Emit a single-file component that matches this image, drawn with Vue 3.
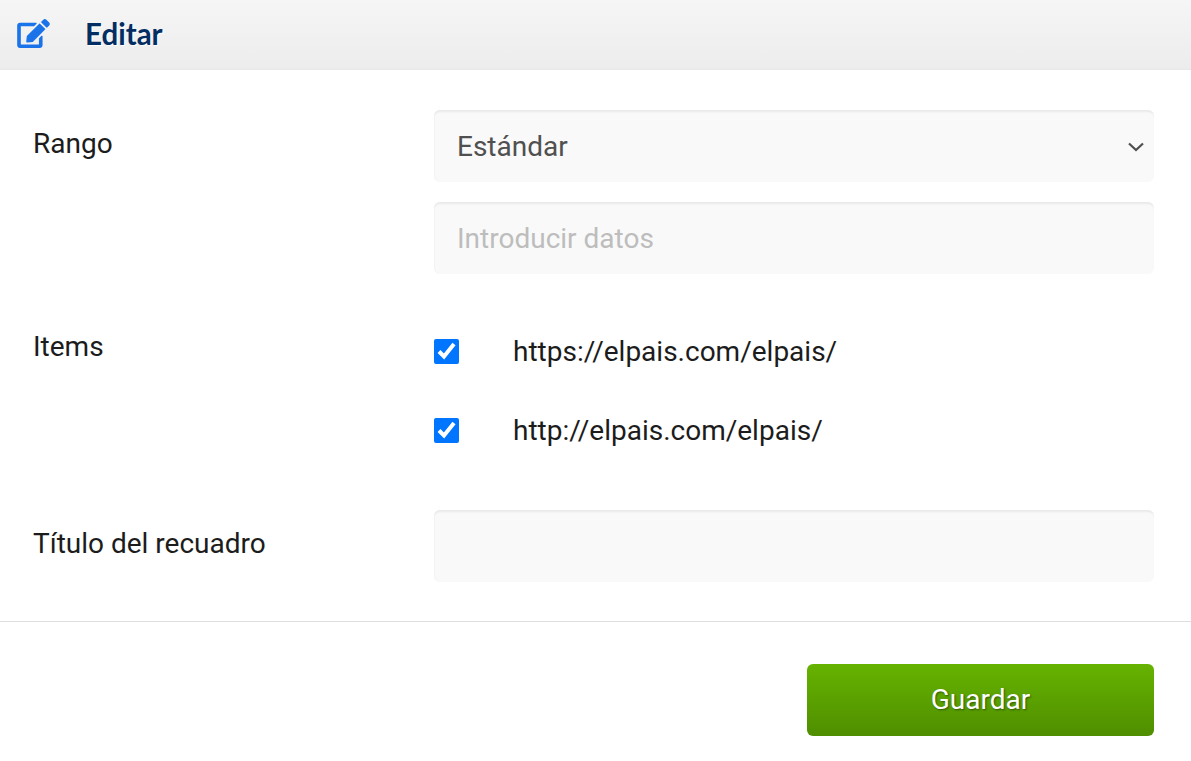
<script setup>
import { ref } from 'vue';

const rango = ref('Estándar');
const items = ref([
  { url: 'https://elpais.com/elpais/', checked: true },
  { url: 'http://elpais.com/elpais/', checked: true },
]);
const titulo = ref('');
</script>

<template>
  <div class="edit-page">
    <header class="edit-head">
      <svg class="edit-icon" viewBox="0 0 576 512" width="33" height="29" aria-hidden="true">
        <path fill="#1a73e8" d="M402.600 83.200l90.200 90.200c3.800 3.800 3.800 10 0 13.800L274.400 405.600l-92.800 10.300c-12.400 1.400-22.900-9.100-21.500-21.500l10.300-92.800L388.800 83.200c3.800-3.800 10-3.800 13.800 0zm162-22.900l-48.800-48.800c-15.200-15.200-39.900-15.200-55.200 0l-35.400 35.400c-3.800 3.800-3.800 10 0 13.800l90.200 90.200c3.800 3.800 10 3.800 13.800 0l35.400-35.400c15.200-15.300 15.200-40 0-55.200zM384 346.200V448H64V128h229.800c3.200 0 6.200-1.300 8.500-3.500l40-40c7.600-7.600 2.200-20.500-8.500-20.500H48C21.500 64 0 85.500 0 112v352c0 26.500 21.500 48 48 48h352c26.500 0 48-21.500 48-48V306.200c0-10.700-12.900-16-20.500-8.500l-40 40c-2.200 2.300-3.500 5.300-3.500 8.500z"/>
      </svg>
      <h1 class="edit-title">Editar</h1>
    </header>

    <form class="edit-form" @submit.prevent>
      <div class="form-row row-rango">
        <label class="row-label">Rango</label>
        <div class="row-fields">
          <div class="select-wrap">
            <select v-model="rango" class="field field-select">
              <option>Estándar</option>
              <option>Personalizado</option>
            </select>
            <svg class="select-arrow" viewBox="0 0 16 10" width="16" height="10" aria-hidden="true">
              <path d="M1 1.500 8 8l7-6.500" fill="none" stroke="#4f4f4f" stroke-width="2.200"/>
            </svg>
          </div>
          <input class="field" type="text" placeholder="Introducir datos" />
        </div>
      </div>

      <div class="form-row row-items">
        <label class="row-label">Items</label>
        <div class="check-list">
          <label v-for="item in items" :key="item.url" class="check-item">
            <input v-model="item.checked" type="checkbox" class="check-box" />
            <span class="check-text">{{ item.url }}</span>
          </label>
        </div>
      </div>

      <div class="form-row row-titulo">
        <label class="row-label">Título del recuadro</label>
        <input v-model="titulo" class="field" type="text" />
      </div>
    </form>

    <footer class="edit-foot">
      <button class="btn-save" type="button">Guardar</button>
    </footer>
  </div>
</template>

<style>
body {
  background: #fff;
}
</style>

<style scoped>
.edit-page {
  font-family: Roboto, "Liberation Sans", sans-serif;
  font-size: 28px;
  color: #1c1c1c;
}

/* cabecera */
.edit-head {
  display: flex;
  align-items: center;
  height: 70px;
  box-sizing: border-box;
  padding-left: 17px;
  background: linear-gradient(#f6f6f6, #ececec);
  border-bottom: 1px solid #e8e8e8;
}
.edit-icon {
  display: block;
  margin-bottom: 3px;
}
.edit-title {
  margin: 0 0 2px 35px;
  font-family: Lato, sans-serif;
  font-size: 29.500px;
  font-weight: 700;
  color: #032e63;
  text-shadow: 1px 1px 0 #fff;
}

/* formulario */
.edit-form {
  padding: 40px 37px 39px 33px;
  border-bottom: 1px solid #dedede;
}
.form-row {
  display: grid;
  grid-template-columns: 401px 720px;
}
.row-label {
  line-height: 32px;
}
.row-rango .row-label {
  padding-top: 18px;
}
.row-fields {
  display: flex;
  flex-direction: column;
  gap: 20px;
}
.field {
  display: block;
  width: 100%;
  height: 72px;
  box-sizing: border-box;
  padding: 0 23px;
  border: 0;
  border-radius: 6px;
  outline: 0;
  background: #f9f9f9;
  box-shadow: inset 0 3px 2px -1px #e9e9e9, inset 1px 0 0 #f4f4f4;
  font-family: inherit;
  font-size: 28px;
  color: #505050;
}
.field::placeholder {
  color: #bdbdbd;
  opacity: 1;
}
.select-wrap {
  position: relative;
}
.field-select {
  appearance: none;
}
.select-arrow {
  position: absolute;
  top: 32px;
  right: 10px;
  pointer-events: none;
}

.row-items {
  margin-top: 57px;
}
.check-list {
  display: flex;
  flex-direction: column;
  gap: 47px;
  padding-top: 4px;
}
.check-item {
  display: flex;
  align-items: center;
  height: 32px;
  line-height: 32px;
}
.check-box {
  width: 25px;
  height: 25px;
  margin: 0 54px 0 0;
  accent-color: #0075ff;
}
.check-text {
  margin-top: 1px;
}

.row-titulo {
  margin-top: 64px;
  align-items: center;
}
.row-titulo .row-label {
  padding-bottom: 4px;
}

/* pie */
.edit-foot {
  display: flex;
  justify-content: flex-end;
  padding: 42px 37px 25px 0;
}
.btn-save {
  width: 347px;
  height: 72px;
  padding: 0 0 2px;
  border: 0;
  border-radius: 6px;
  background: linear-gradient(#66b300, #4f8e00);
  font-family: inherit;
  font-size: 28px;
  color: #fff;
  text-shadow: 1px 1px 2px rgba(0, 0, 0, 0.45);
  cursor: pointer;
}
</style>
